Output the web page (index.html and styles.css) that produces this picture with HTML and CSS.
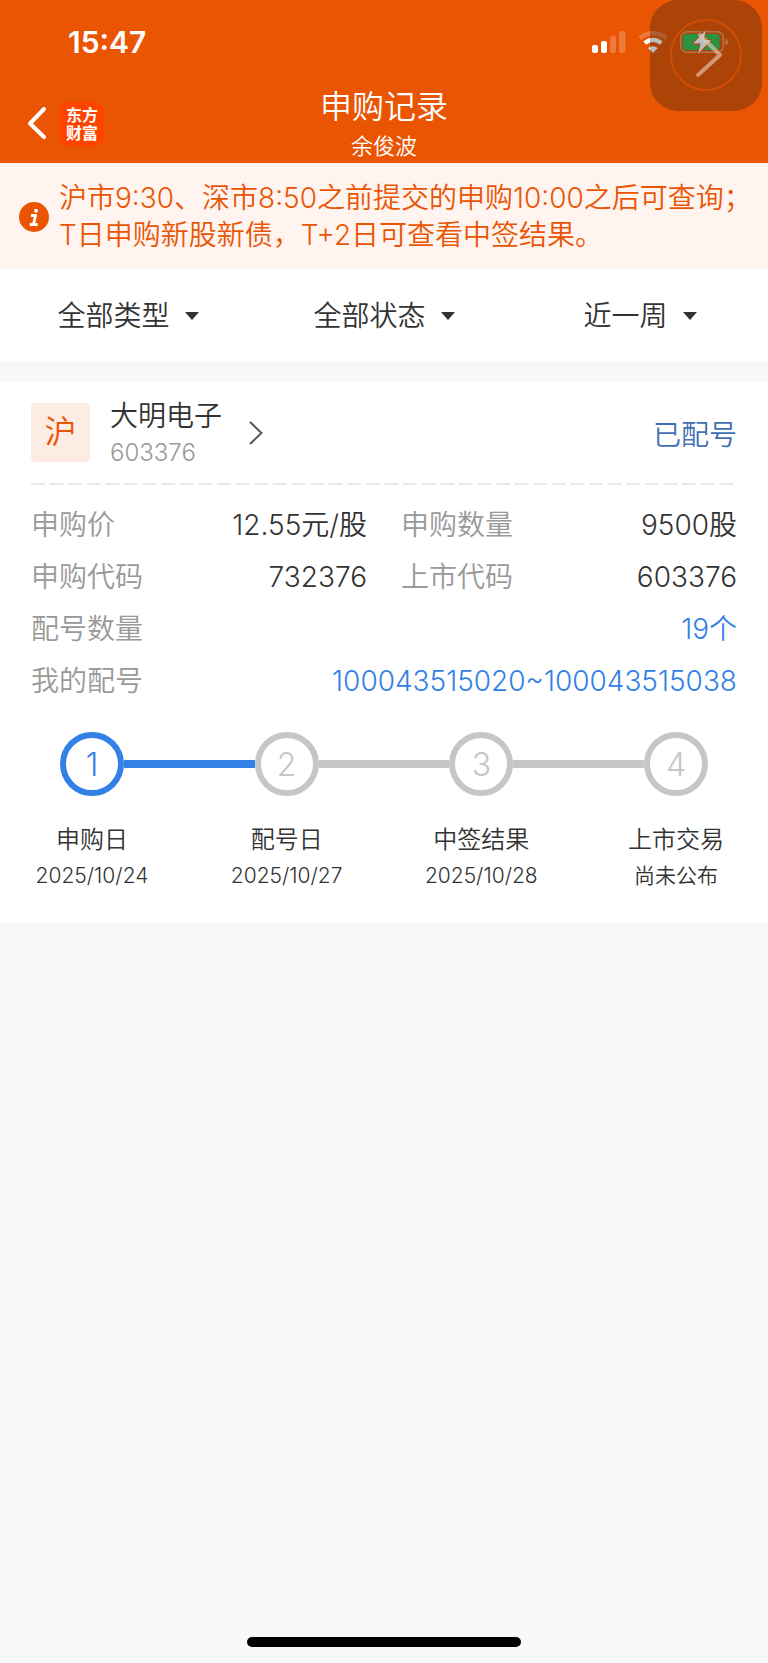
FILE: index.html
```html
<!DOCTYPE html>
<html lang="zh-CN">
<head>
<meta charset="utf-8">
<meta name="viewport" content="width=device-width, initial-scale=1">
<title>申购记录</title>
<link rel="stylesheet" href="styles.css">
</head>
<body>
<header class="header">
  <div class="status">
    <time class="clock">15:47</time>
    <div class="status-icons">
      <svg width="34" height="22" viewBox="0 0 34 22" fill="#fff" aria-hidden="true">
        <rect x="0" y="14" width="6" height="8" rx="2"/>
        <rect x="9" y="10" width="6" height="12" rx="2"/>
        <rect x="18" y="5" width="6" height="17" rx="2" opacity=".22"/>
        <rect x="27" y="0" width="6.500" height="22" rx="2" opacity=".22"/>
      </svg>
      <svg width="30" height="22" viewBox="0 0 30 22" fill="none" stroke="#fff" aria-hidden="true">
        <path d="M1.800 7.200a19.500 19.500 0 0 1 26.400 0" stroke-width="4.200" opacity=".22"/>
        <path d="M6.800 12.200a12 12 0 0 1 16.400 0" stroke-width="4.200"/>
        <path d="M15 22l-4.800-4.900a7 7 0 0 1 9.600 0z" fill="#fff" stroke="none"/>
      </svg>
      <svg width="48" height="24" viewBox="0 0 48 24" aria-hidden="true">
        <rect x=".8" y="1.800" width="42.500" height="20.500" rx="6" fill="none" stroke="#fff" stroke-width="1.500" opacity=".4"/>
        <path d="M45.500 8.500c3 1 3 6 0 7z" fill="#fff" opacity=".5"/>
        <rect x="3" y="4" width="36.500" height="16" rx="3.500" fill="#34c759"/>
        <path d="M26 0L13 13.500h7.500L18 24l13-14h-7.500z" fill="#fff" stroke="#ea5504" stroke-width="2" paint-order="stroke" stroke-linejoin="round"/>
      </svg>
    </div>
  </div>
  <div class="navbar">
    <div class="nav-left">
      <button class="back" type="button" aria-label="返回">
        <svg width="20" height="34" viewBox="0 0 20 34" fill="none" stroke="#fff" stroke-width="4" stroke-linecap="round" stroke-linejoin="round"><path d="M18 2L4 16.500 18 30"/></svg>
      </button>
      <span class="logo">东方<br>财富</span>
    </div>
    <div class="titles">
      <h1 class="title">申购记录</h1>
      <p class="user">余俊波</p>
    </div>
  </div>
</header>

<button class="float" type="button" aria-label="展开">
  <svg width="112" height="111" viewBox="0 0 112 111" fill="none">
    <circle cx="56" cy="55" r="35" stroke="#ea5504" stroke-opacity=".6" stroke-width="2"/>
    <path d="M50 35l20 20-22 20" stroke="#e6c4b0" stroke-opacity=".65" stroke-width="4" stroke-linecap="round" stroke-linejoin="round"/>
  </svg>
</button>

<main class="main">
  <section class="notice">
    <svg class="info" width="30" height="30" viewBox="0 0 30 30" aria-hidden="true">
      <circle cx="15" cy="15" r="15" fill="#ea5504"/>
      <circle cx="17" cy="8.800" r="2" fill="#fff"/>
      <path d="M12 13.500h4.500l-2 9M10.800 22.500h7.800" fill="none" stroke="#fff" stroke-width="2.800"/>
    </svg>
    <p class="notice-text">沪市9:30、深市8:50之前提交的申购10:00之后可查询；<br>T日申购新股新债，T+2日可查看中签结果。</p>
  </section>

  <form class="filters">
    <label class="filter">
      <select class="select" aria-label="类型"><option>全部类型</option></select>
      <svg width="14" height="8" viewBox="0 0 14 8" aria-hidden="true"><path d="M0 0h14L7 8z" fill="#333"/></svg>
    </label>
    <label class="filter">
      <select class="select" aria-label="状态"><option>全部状态</option></select>
      <svg width="14" height="8" viewBox="0 0 14 8" aria-hidden="true"><path d="M0 0h14L7 8z" fill="#333"/></svg>
    </label>
    <label class="filter">
      <select class="select" aria-label="时间"><option>近一周</option></select>
      <svg width="14" height="8" viewBox="0 0 14 8" aria-hidden="true"><path d="M0 0h14L7 8z" fill="#333"/></svg>
    </label>
  </form>

  <article class="card">
    <div class="card-head">
      <span class="market">沪</span>
      <div class="stock">
        <h2 class="stock-name">大明电子</h2>
        <p class="stock-code">603376</p>
      </div>
      <svg width="14" height="24" viewBox="0 0 14 24" fill="none" stroke="#555" stroke-width="2" aria-hidden="true"><path d="M1 1l11.500 11L1 23"/></svg>
      <span class="state">已配号</span>
    </div>
    <svg class="divider" width="100%" height="2" aria-hidden="true"><line x1="0" y1="1" x2="100%" y2="1" stroke="#e8e8e8" stroke-width="2" stroke-dasharray="14 4.600"/></svg>
    <dl class="details">
      <div class="row"><dt>申购价</dt><dd>12.55元/股</dd></div>
      <div class="row"><dt>申购数量</dt><dd>9500股</dd></div>
      <div class="row"><dt>申购代码</dt><dd>732376</dd></div>
      <div class="row"><dt>上市代码</dt><dd>603376</dd></div>
      <div class="row wide"><dt>配号数量</dt><dd><a class="link" href="#numbers">19个</a></dd></div>
      <div class="row wide"><dt>我的配号</dt><dd><a class="link" href="#numbers">100043515020~100043515038</a></dd></div>
    </dl>
    <div class="track">
      <span class="dot done">1</span><span class="bar done"></span>
      <span class="dot">2</span><span class="bar"></span>
      <span class="dot">3</span><span class="bar"></span>
      <span class="dot">4</span>
    </div>
    <ol class="steps">
      <li class="step"><span class="step-name">申购日</span><span class="step-date">2025/10/24</span></li>
      <li class="step"><span class="step-name">配号日</span><span class="step-date">2025/10/27</span></li>
      <li class="step"><span class="step-name">中签结果</span><span class="step-date">2025/10/28</span></li>
      <li class="step"><span class="step-name">上市交易</span><span class="step-date">尚未公布</span></li>
    </ol>
  </article>
</main>
<footer class="home"><span class="home-bar"></span></footer>
</body>
</html>
```

FILE: styles.css
```css
* { box-sizing: border-box; margin: 0; padding: 0; }

body {
  display: flex;
  flex-direction: column;
  min-height: 100vh;
  position: relative;
  background: #f7f8fa;
  color: #333;
  font-family: Inter, "Noto Sans CJK SC", sans-serif;
  font-size: 28px;
  font-weight: 350;
}

svg { display: block; flex: none; }
button { border: 0; background: none; font: inherit; }

.header { background: #ea5504; color: #fff; }
.status {
  display: flex;
  justify-content: space-between;
  align-items: center;
  height: 84px;
  padding: 0 40px 0 68px;
}
.clock { font-size: 30px; font-weight: 600; }
.status-icons { display: flex; align-items: center; gap: 12px; }

.navbar {
  display: grid;
  grid-template-columns: 1fr auto 1fr;
  height: 79px;
  padding: 0 26px;
}
.nav-left { display: flex; align-items: center; gap: 14px; }
.logo {
  width: 44px;
  height: 44px;
  padding-top: 4px;
  border-radius: 9px;
  background: #ff4400;
  font-size: 16px;
  font-weight: 700;
  line-height: 18px;
  text-align: center;
}
.titles { text-align: center; }
.title { font-size: 32px; font-weight: 350; line-height: 46px; }
.user { font-size: 22px; line-height: 32px; }

.float {
  position: absolute;
  top: 0;
  right: 6px;
  border-radius: 28px;
  background: rgba(10, 22, 18, .28);
}

.notice {
  display: flex;
  align-items: center;
  gap: 10px;
  padding: 17px 19px 15px;
  background: #fff4f0;
  color: #ea5504;
}
.notice-text { font-size: 28px; line-height: 37px; white-space: nowrap; }

.filters {
  display: grid;
  grid-template-columns: repeat(3, 1fr);
  height: 92px;
  padding-top: 2px;
  background: #fff;
}
.filter { display: flex; align-items: center; justify-content: center; gap: 14px; }
.select {
  appearance: none;
  border: 0;
  background: none;
  color: inherit;
  font: inherit;
}

.card { margin-top: 21px; padding: 0 31px 30px; background: #fff; }
.card-head { display: flex; align-items: center; height: 101px; }
.market {
  width: 59px;
  height: 59px;
  margin-right: 20px;
  border-radius: 4px;
  background: #fdece4;
  color: #ea5504;
  font-size: 32px;
  line-height: 58px;
  text-align: center;
}
.stock { margin-right: 27px; }
.stock-name { font-size: 28px; font-weight: 350; line-height: 40px; }
.stock-code { color: #999; font-size: 24px; line-height: 34px; }
.state { margin-left: auto; color: #416fb4; }

.details {
  display: grid;
  grid-template-columns: 1fr 1fr;
  column-gap: 34px;
  padding: 14px 0;
}
.row { display: flex; justify-content: space-between; line-height: 52px; }
.wide { grid-column: 1 / -1; }
dt { color: #999; }
.link { color: #3380e6; text-decoration: none; }

.track { display: flex; align-items: center; padding: 11px 29px 25px; }
.dot {
  width: 64px;
  height: 64px;
  border: 6px solid #c6c6c6;
  border-radius: 50%;
  color: #c6c6c6;
  font-size: 32px;
  font-weight: 300;
  line-height: 53px;
  text-align: center;
}
.dot.done { border-color: #3380e6; color: #3380e6; }
.bar { flex: 1; height: 8px; background: #c6c6c6; }
.bar.done { background: #3380e6; }

.steps { display: flex; justify-content: space-between; list-style: none; }
.step { display: flex; flex-direction: column; align-items: center; width: 122px; }
.step-name { font-size: 24px; line-height: 38px; }
.step-date { font-size: 21px; line-height: 34px; }

.home { display: flex; justify-content: center; margin-top: auto; padding-bottom: 16px; }
.home-bar { width: 274px; height: 10px; border-radius: 5px; background: #000; }
```
